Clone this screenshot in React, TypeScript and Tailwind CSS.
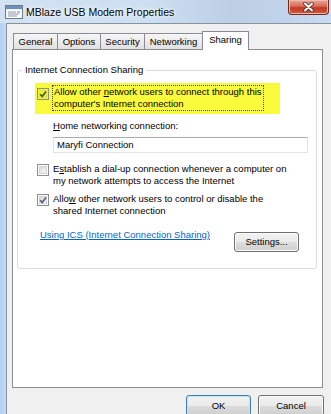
import React from "react";

type CheckProps = {
  checked?: boolean;
  yellow?: boolean;
};

const CheckBox: React.FC<CheckProps> = ({ checked, yellow }) => (
  <span
    className={
      "relative block w-[12px] h-[12px] shrink-0 border border-[#8e8f8f] p-px " +
      (yellow ? "bg-[#f4f43e]" : "bg-white")
    }
  >
    <span
      className={
        "block w-full h-full border " +
        (yellow
          ? "border-[#e2e23a] bg-[#eeee3c]"
          : "border-[#d2d2d2] bg-[linear-gradient(135deg,#d8d8d8,#f8f8f8)]")
      }
    />
    {checked && (
      <svg
        className="absolute left-0 top-0"
        width="10"
        height="10"
        viewBox="0 0 10 10"
      >
        <path
          d="M2.2 5.2 L4.2 7.4 L8 2.4"
          fill="none"
          stroke={yellow ? "#3f5a2a" : "#4a5d86"}
          strokeWidth="1.6"
        />
      </svg>
    )}
  </span>
);

const WinButton: React.FC<{
  className?: string;
  primary?: boolean;
  children: React.ReactNode;
}> = ({ className, primary, children }) => (
  <button
    type="button"
    className={
      "flex items-center justify-center rounded-[3px] border leading-[12px] bg-[linear-gradient(#f2f2f2,#ebebeb_50%,#dddddd_50%,#cfcfcf)] " +
      (primary
        ? "border-[#3c7fb1] shadow-[inset_0_0_0_1px_#bfe6f9]"
        : "border-[#707070] shadow-[inset_0_0_0_1px_#fbfbfb]") +
      " " +
      (className || "")
    }
  >
    {children}
  </button>
);

const Tab: React.FC<{ w: string; first?: boolean; children: React.ReactNode }> = ({
  w,
  first,
  children,
}) => (
  <div
    className={
      "h-[16px] flex items-center justify-center pt-px border-t border-l border-r border-[#898c95] bg-[linear-gradient(#f6f6f6,#ececec_50%,#e0e0e0)] leading-[12px] " +
      w +
      (first ? " ml-px" : " -ml-px")
    }
  >
    {children}
  </div>
);

const TitleBar = () => (
  <div className="h-[23px] shrink-0 flex items-start bg-[linear-gradient(90deg,#d2e2f3_0%,#cddff2_45%,#bccfe4_70%,#c0d3ea_85%,#c8dbf0_100%)]">
    <svg className="ml-[5px] mt-[5px]" width="18" height="14" viewBox="0 0 18 14">
      <rect x="0.5" y="0.5" width="17" height="13" fill="#eef2f7" stroke="#6f7c8c" />
      <rect x="1" y="1" width="16" height="3" fill="#6f8fbf" />
      <rect x="2" y="5" width="14" height="8" fill="#ffffff" />
      <path d="M3 7h8M3 9h11M3 11h9" stroke="#8a96a6" strokeWidth="1" />
      <path d="M12 7h3" stroke="#5a7bb0" strokeWidth="1" />
    </svg>
    <div className="ml-[3px] mt-[6px] leading-[12px] text-[10.5px] text-black [text-shadow:0_0_6px_#ffffff,0_0_3px_#ffffff]">
      MBlaze USB Modem Properties
    </div>
    <div className="ml-auto mr-[2px] w-[41px] h-[15px] rounded-b-[4px] border border-t-0 border-[#6e2a20] bg-[linear-gradient(#e9a99a,#d66a55_45%,#c23a24_55%,#d0573c)] shadow-[inset_0_0_0_1px_#f0b9ab] flex items-center justify-center">
      <svg width="13" height="10" viewBox="0 0 13 10">
        <path d="M3 1.5 L10 8.5 M10 1.5 L3 8.5" stroke="#4a2a26" strokeWidth="3.6" strokeLinecap="round" />
        <path d="M3 1.5 L10 8.5 M10 1.5 L3 8.5" stroke="#ffffff" strokeWidth="2" strokeLinecap="round" />
      </svg>
    </div>
  </div>
);

export default function App() {
  return (
    <div className="w-[331px] h-[414px] overflow-hidden flex flex-col bg-[#c6daf0] font-['Liberation_Sans',Arial,sans-serif] text-[9.5px] text-black">
      <TitleBar />
      <div className="flex flex-1 min-h-0">
        <div className="w-[6px] shrink-0 bg-[linear-gradient(90deg,#b3d0f2,#c4dbf6)]" />
        <div className="flex-1 border-l border-t border-[#8593a3] bg-[#f0f0f0] pl-[5px] pt-[7px]">
          {/* Tabs */}
          <div className="h-[18px] flex items-end">
            <Tab w="w-[45px]" first>
              General
            </Tab>
            <Tab w="w-[44px]">Options</Tab>
            <Tab w="w-[45px]">Security</Tab>
            <Tab w="w-[59px]">Networking</Tab>
            <div className="relative z-10 -ml-px mb-[-1px] w-[47px] h-[19px] flex items-center justify-center pb-[2px] border-t border-l border-r border-[#898c95] bg-white leading-[12px]">
              Sharing
            </div>
          </div>

          {/* Tab page */}
          <div className="w-[311px] h-[339px] border border-[#898c95] bg-white pl-[4px] pt-[14px]">
            <fieldset className="w-[300px] border border-[#d5dfe5] rounded-[3px] pb-[16px]">
              <legend className="ml-[4px] px-[3px] leading-[12px]">Internet Connection Sharing</legend>

              <div className="mt-[7px] ml-[17px] w-[245px] h-[31px] bg-[#fafa3c] flex items-start">
                <div className="mt-[5px] ml-[2px]">
                  <CheckBox checked yellow />
                </div>
                <div className="ml-[3px] mt-[2px] h-[26px] border border-dotted border-[#444] px-px leading-[12px] whitespace-nowrap">
                  Allow other <span className="underline">n</span>etwork users to connect through this
                  <br />
                  computer's Internet connection
                </div>
              </div>

              <div className="mt-[6px] ml-[35px] leading-[12px]">
                <span className="underline">H</span>ome networking connection:
              </div>
              <div className="mt-[5px] ml-[35px] w-[255px] h-[16px] border border-[#dfe3ea] border-t-[#abadb3] pl-[3px] leading-[14px]">
                Maryfi Connection
              </div>

              <div className="mt-[10px] ml-[19px] flex items-start">
                <div className="mt-px">
                  <CheckBox />
                </div>
                <div className="ml-[4px] leading-[12px] whitespace-nowrap">
                  E<span className="underline">s</span>tablish a dial-up connection whenever a computer on
                  <br />
                  my network attempts to access the Internet
                </div>
              </div>

              <div className="mt-[6px] ml-[19px] flex items-start">
                <div className="mt-px">
                  <CheckBox checked />
                </div>
                <div className="ml-[4px] leading-[12px] whitespace-nowrap">
                  Allo<span className="underline">w</span> other network users to control or disable the
                  <br />
                  shared Internet connection
                </div>
              </div>

              <div className="mt-[12px] flex items-start">
                <a className="ml-[22px] leading-[12px] text-[#0066cc] underline">
                  Using ICS (Internet Connection Sharing)
                </a>
                <WinButton className="ml-auto mr-[17px] mt-[3px] w-[65px] h-[20px]">Settings...</WinButton>
              </div>
            </fieldset>
          </div>

          {/* Dialog buttons */}
          <div className="mt-[7px] w-[312px] flex justify-end gap-[7px]">
            <WinButton primary className="w-[65px] h-[21px]">
              OK
            </WinButton>
            <WinButton className="w-[66px] h-[21px]">Cancel</WinButton>
          </div>
        </div>
      </div>
    </div>
  );
}
